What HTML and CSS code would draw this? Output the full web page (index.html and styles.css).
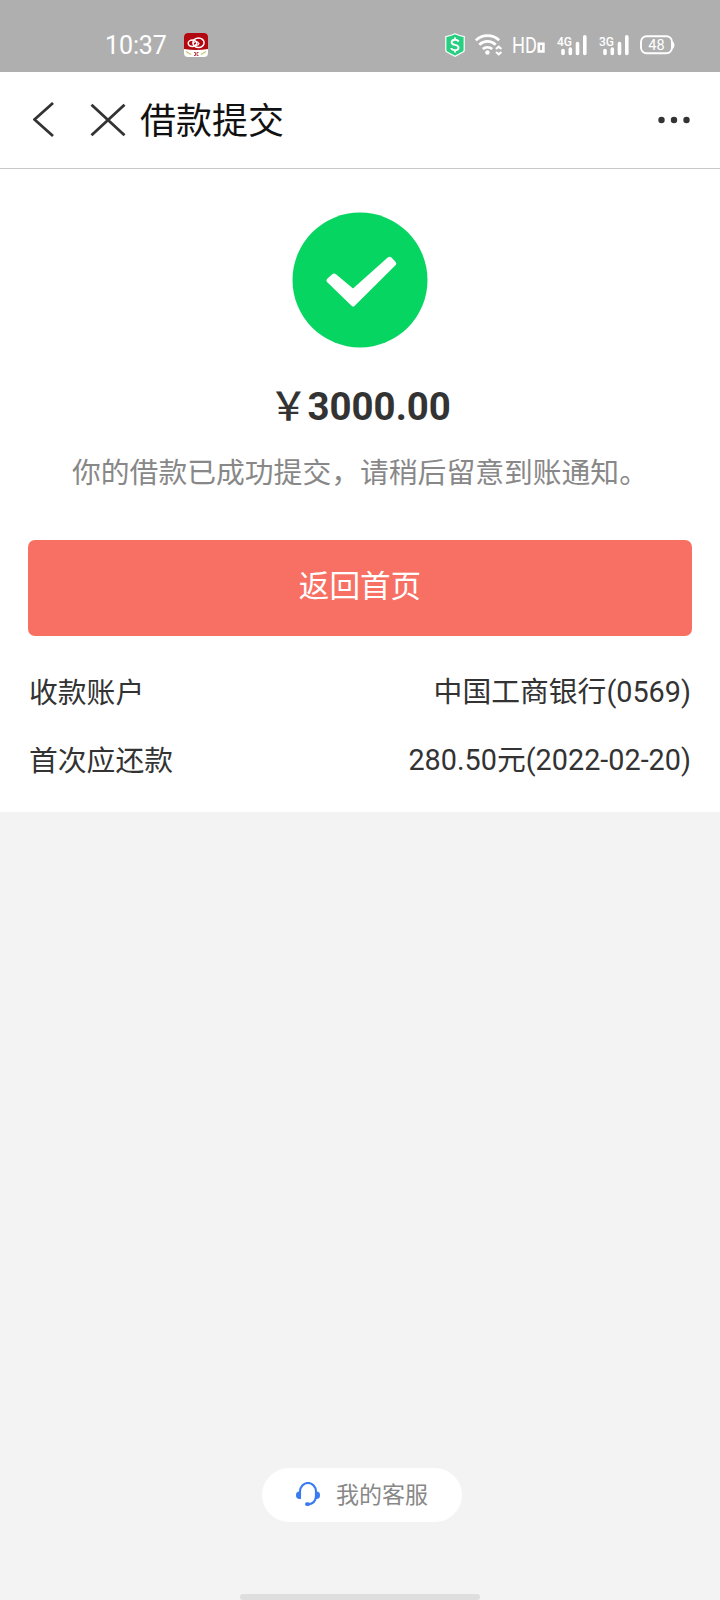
FILE: index.html
```html
<!DOCTYPE html>
<html lang="zh-CN">
<head>
    <meta charset="UTF-8">
    <meta name="viewport" content="width=device-width, initial-scale=1.0">
    <title>借款提交</title>
    <link rel="stylesheet" href="styles.css">
</head>
<body>
    <div class="status-bar">
        <span class="time">10:37</span>
        <svg class="app-icon" width="24" height="24" viewBox="0 0 24 24">
            <rect width="24" height="24" rx="4" fill="#fff"/>
            <path d="M0 16V4a4 4 0 0 1 4-4h16a4 4 0 0 1 4 4v12q-12 2-24 0z" fill="#b20910"/>
            <ellipse cx="14.500" cy="9.800" rx="5.600" ry="4.800" fill="none" stroke="#fff" stroke-width="1.500"/>
            <ellipse cx="8.500" cy="10.300" rx="4.300" ry="3.200" fill="none" stroke="#fff" stroke-width="1.500"/>
            <path d="M9 10.500q3-4 6 0q-1.500 3-4 1" fill="none" stroke="#fff" stroke-width="1.200"/>
            <path d="M2 18.500l5 3M22 18.500l-5 3" stroke="#c9c970" stroke-width="1.400"/>
            <path d="M10 19.500h1.500v3H10M14.500 19.500H13v3h1.500" fill="none" stroke="#b8444a" stroke-width="1"/>
        </svg>
        <div class="status-icons">
            <svg width="20" height="24" viewBox="0 0 20 24">
                <path d="M10 .8Q14.500 3 19.200 3.600V17.500Q19 18.300 18 19L10 23.200 2 19Q1 18.300.8 17.500V3.600Q5.500 3 10 .8z" fill="#27cf80" stroke="#fff" stroke-width="1.200"/>
                <path d="M13.600 8.600Q13 6.700 10 6.700T6.600 9.200Q6.600 11.300 10 11.900T13.600 14.700Q13.500 17.200 10 17.200T6.300 15M10 4.400V7M10 17V19.400" fill="none" stroke="#fff" stroke-width="1.900"/>
            </svg>
            <svg width="28" height="22" viewBox="0 0 28 22">
                <g fill="none" stroke="#fff" stroke-width="2.700">
                    <path d="M.8 6.300a17 17 0 0 1 23.400 0"/>
                    <path d="M4.300 10.700a12 12 0 0 1 16.400 0"/>
                    <path d="M7.800 15a7.200 7.200 0 0 1 9.400 0"/>
                    <path d="M21 15l2.700-2.300 2.700 2.300M21 18l2.700 2.300 2.700-2.300" stroke-width="2.200"/>
                </g>
                <circle cx="12.400" cy="18.500" r="2.200" fill="#fff"/>
            </svg>
            <svg class="hd" width="34" height="26" viewBox="0 -2 34 26">
                <text x="0" y="18.500" font-size="22" textLength="25" lengthAdjust="spacingAndGlyphs">HD</text>
                <path d="M26.800 9.800h4.600v7.600h-4.600z" fill="none" stroke="#fff" stroke-width="2.600"/>
            </svg>
            <svg class="signal" width="31" height="22" viewBox="0 0 31 22">
                <text x="0" y="11.500" font-size="13.500" textLength="15" lengthAdjust="spacingAndGlyphs">4G</text>
                <path d="M6 16.500v3M13.300 15v4.500M20.500 9.500v10M27.800 2.800v16.700"/>
            </svg>
            <svg class="signal" width="31" height="22" viewBox="0 0 31 22">
                <text x="0" y="11.500" font-size="13.500" textLength="15" lengthAdjust="spacingAndGlyphs">3G</text>
                <path d="M6 16.500v3M13.300 15v4.500M20.500 9.500v10M27.800 2.800v16.700"/>
            </svg>
            <svg class="battery" width="35" height="22" viewBox="0 0 35 22">
                <rect x="1" y="2.300" width="31" height="17" rx="5.500" fill="none" stroke="#fff" stroke-width="1.900"/>
                <path d="M32 7q2.500 1 2.500 4t-2.500 4z" fill="#fff"/>
                <text x="16.500" y="15.900" font-size="14.500" text-anchor="middle">48</text>
            </svg>
        </div>
    </div>

    <header class="nav-bar">
        <svg class="back" width="22" height="36" viewBox="0 0 22 36">
            <path d="M20 1L1.500 17.500l18.500 16.500" fill="none" stroke="#333" stroke-width="2.800"/>
        </svg>
        <svg class="close" width="36" height="34" viewBox="0 0 36 34">
            <path d="M1.500 1.700l33 30.600M34.500 1.700l-33 30.600" stroke="#333" stroke-width="2.800"/>
        </svg>
        <h1 class="title">借款提交</h1>
        <svg class="more" width="34" height="8" viewBox="0 0 34 8">
            <circle cx="4.500" cy="4" r="3.200" fill="#333"/>
            <circle cx="17" cy="4" r="3.200" fill="#333"/>
            <circle cx="29.500" cy="4" r="3.200" fill="#333"/>
        </svg>
    </header>

    <main class="result">
        <svg class="success" width="136" height="136" viewBox="0 0 136 136">
            <circle cx="68" cy="68" r="67.500" fill="#07d562"/>
            <path d="M35 67L40.200 62.200Q42 60.800 44 62.300L61 76.500 96 45.200Q97.800 44 99.500 45.500L103.700 50Q105 51.500 103.700 53L62.500 94Q61.200 95.200 59.800 94L35 70Q33.700 68.500 35 67z" fill="#fff"/>
        </svg>
        <div class="amount"><span class="yen">￥</span>3000.00</div>
        <p class="message">你的借款已成功提交，请稍后留意到账通知。</p>
        <button class="home-btn">返回首页</button>
        <div class="row">
            <span class="label">收款账户</span>
            <span>中国工商银行(0569)</span>
        </div>
        <div class="row">
            <span class="label">首次应还款</span>
            <span>280.50元(2022-02-20)</span>
        </div>
    </main>

    <footer class="footer">
        <a class="service">
            <svg width="24" height="24" viewBox="0 0 24 24">
                <path d="M4 14V9.500a8 8.500 0 0 1 16 0V14Q19.500 21.500 12.500 22.300" fill="none" stroke="#3b7bf0" stroke-width="2.200"/>
                <path d="M5 9.500v7.500H3.500Q0 17 0 13.200T3.500 9.500zM19 9.500v7.500h1.500Q24 17 24 13.200T20.500 9.500z" fill="#3b7bf0"/>
                <rect x="9" y="20.200" width="5" height="3.800" rx="1.900" fill="#3b7bf0"/>
            </svg>
            <span class="service-text">我的客服</span>
        </a>
        <div class="home-indicator"></div>
    </footer>
</body>
</html>
```
FILE: styles.css
```css
* {
    box-sizing: border-box;
}
body {
    margin: 0;
    height: 1600px;
    display: flex;
    flex-direction: column;
    background-color: #f3f3f3;
    font-family: Roboto, "Noto Sans CJK SC", sans-serif;
    color: #333;
}
svg {
    display: block;
    flex-shrink: 0;
}

/* Status bar */
.status-bar {
    height: 72px;
    padding: 17px 45px 0 105px;
    display: flex;
    align-items: center;
    background-color: #afafaf;
    color: #fff;
}
.status-bar text {
    fill: #fff;
}
.time {
    width: 79px;
    padding-top: 2px;
    font-size: 25px;
    letter-spacing: -0.1px;
    line-height: 30px;
}
.status-icons {
    display: flex;
    align-items: center;
    margin-left: auto;
}
.status-icons svg {
    margin-left: 10px;
}
.status-icons .hd {
    margin-left: 9px;
}
.status-icons .signal path {
    fill: none;
    stroke: #fff;
    stroke-width: 3.6;
    stroke-linecap: round;
}
.status-icons .signal {
    margin-left: 11px;
}
.status-icons .signal text {
    font-weight: 500;
}

/* Title bar */
.nav-bar {
    height: 97px;
    padding: 0 29px 0 33px;
    display: flex;
    align-items: center;
    background-color: #fff;
    border-bottom: 1px solid #c8c8c8;
}
.close {
    margin-left: 35px;
}
.title {
    margin: 0 0 0 14px;
    padding-top: 3px;
    font-size: 36px;
    font-weight: 400;
    line-height: 48px;
    color: #111;
}
.more {
    margin-left: auto;
}

/* Result */
.result {
    height: 643px;
    padding: 43px 28px 0;
    display: flex;
    flex-direction: column;
    align-items: center;
    background-color: #fff;
}
.amount {
    margin-top: 35px;
    font-size: 38.4px;
    font-weight: 700;
    line-height: 48px;
}
.yen {
    font-weight: 500;
}
.message {
    margin: 22px 0 0;
    font-size: 28.8px;
    line-height: 40px;
    color: #888;
}
.home-btn {
    width: 100%;
    height: 96px;
    margin: 47px 0 19px;
    padding: 0 0 8px;
    border: none;
    border-radius: 7px;
    background-color: #f77063;
    color: #fff;
    font-family: inherit;
    font-size: 30.6px;
}
.row {
    width: 100%;
    height: 68px;
    padding: 0 1px;
    display: flex;
    justify-content: space-between;
    align-items: center;
    font-size: 28.8px;
}
.label {
    padding-top: 2px;
}

/* Customer service */
.footer {
    margin-top: auto;
    display: flex;
    flex-direction: column;
    align-items: center;
}
.service {
    width: 200px;
    height: 54px;
    margin-left: 4px;
    padding: 0 0 2px 34px;
    display: flex;
    align-items: center;
    gap: 16px;
    border-radius: 27px;
    background-color: #fff;
    color: #888;
    font-size: 23px;
}
.service-text {
    padding-bottom: 2px;
}
.home-indicator {
    width: 240px;
    height: 6px;
    margin-top: 72px;
    border-radius: 3px;
    background-color: #dedede;
}
```
